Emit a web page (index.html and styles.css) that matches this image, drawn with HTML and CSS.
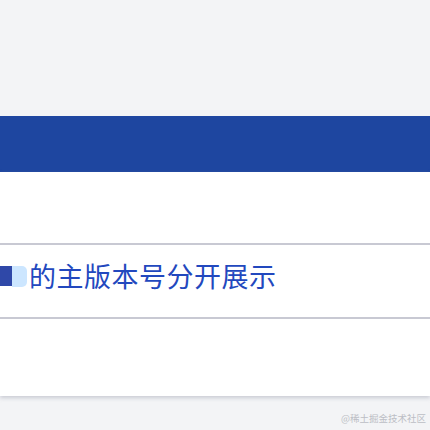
FILE: index.html
```html
<!DOCTYPE html>
<html lang="zh-CN">
<head>
    <meta charset="UTF-8">
    <meta name="viewport" content="width=device-width, initial-scale=1.0">
    <title>版本号</title>
    <link rel="stylesheet" href="styles.css">
</head>
<body>
    <div class="Top-Space"></div>
    <div class="Blue-Bar"></div>
    <section class="Card">
        <div class="Text-Row">
            <span class="Cursor"></span>
            <span class="Select"></span>
            <span class="Line-Text">的主版本号分开展示</span>
        </div>
    </section>
    <div class="Footer">
        <span class="Mark">@稀土掘金技术社区</span>
    </div>
</body>
</html>
```

FILE: styles.css
```css
*{
    box-sizing: border-box;
    padding: 0;
    margin: 0;
    font-family: "Noto Sans CJK SC", "Noto Sans", sans-serif;
}
body{
    width: 430px;
    height: 430px;
    overflow: hidden;
    background-color: #f3f4f6;
}
.Top-Space{
    height: 116px;
}
.Blue-Bar{
    height: 56px;
    background-color: #1e46a0;
}
.Card{
    height: 224px;
    background-color: #fff;
    padding-top: 71px;
    box-shadow: 0 2px 4px rgba(150,152,170,0.45);
}
.Text-Row{
    height: 76px;
    border-top: 2px solid #c8c9d3;
    border-bottom: 2px solid #c8c9d3;
    display: flex;
    align-items: center;
    padding-bottom: 10px;
}
.Cursor{
    width: 12px;
    height: 20px;
    background-color: #2f48a8;
}
.Select{
    width: 15px;
    height: 21px;
    background-color: #cce6ff;
    border-radius: 0 5px 5px 0;
    margin-right: 2px;
}
.Line-Text{
    font-size: 27px;
    line-height: 36px;
    color: #2248be;
    letter-spacing: 0.5px;
}
.Footer{
    display: flex;
    justify-content: flex-end;
    padding: 15px 4px 0 0;
}
.Mark{
    font-size: 9.5px;
    color: #bcbec5;
}
```
